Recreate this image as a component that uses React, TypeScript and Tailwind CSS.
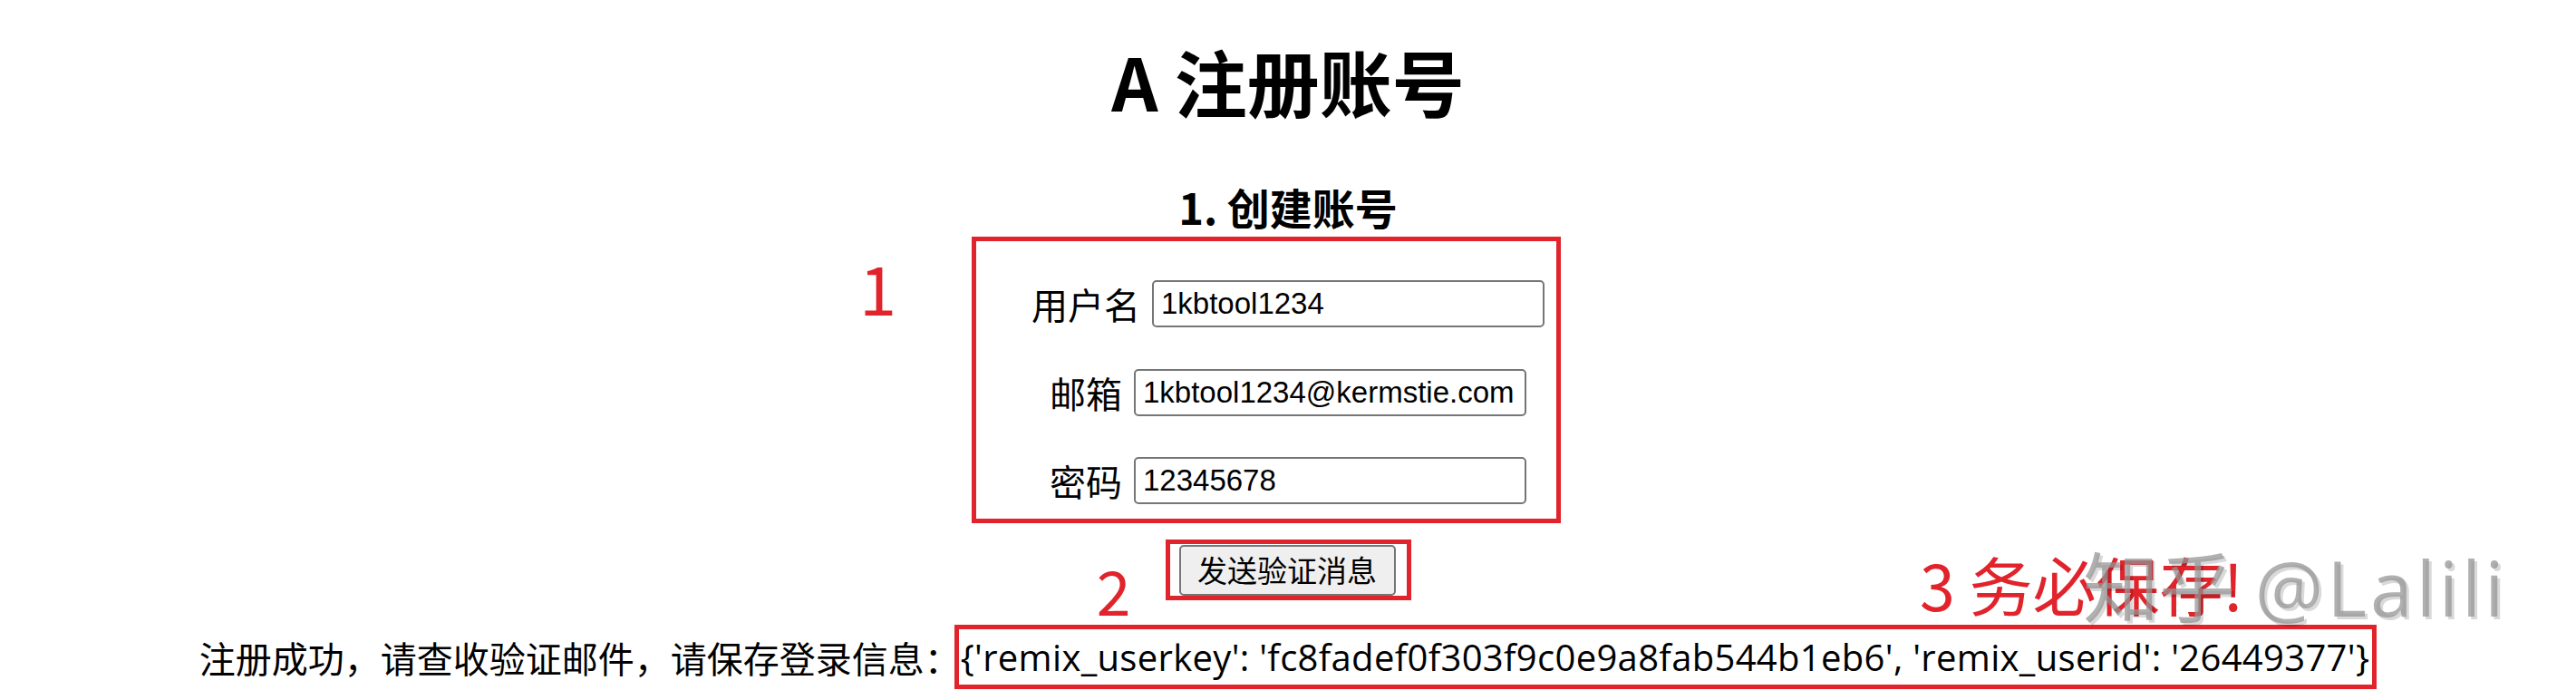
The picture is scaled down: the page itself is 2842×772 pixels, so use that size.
import React from "react";

export default function App() {
  const red = "border-[#e1232b]";
  return (
    <div className="relative w-full h-[772px] overflow-hidden bg-white text-black font-['Noto_Sans_CJK_SC',sans-serif] flex flex-col items-center">
      <h1 className="mt-[48px] text-[80px] leading-none font-bold whitespace-nowrap">A 注册账号</h1>
      <h3 className="mt-[76px] text-[47px] leading-none font-bold whitespace-nowrap">1. 创建账号</h3>

      <div className={`relative mt-[10px] w-[650px] ml-[-48px] pl-[48px] pt-[43px] pb-[16px] border-[5px] ${red} flex flex-col items-center`}>
        <span className="absolute right-[calc(100%+88px)] top-[13px] text-[74px] leading-none text-[#e1232b]">1</span>
        <div className="flex items-center gap-[13px] h-[52px]">
          <label className="text-[40px] leading-none whitespace-nowrap">用户名</label>
          <input
            readOnly
            value="1kbtool1234"
            className="w-[433px] h-[52px] border-2 border-[#767676] rounded-[5px] px-[8px] text-[33px] font-['Liberation_Sans',Arial,sans-serif] outline-none"
          />
        </div>
        <div className="mt-[46px] flex items-center gap-[13px] h-[52px]">
          <label className="text-[40px] leading-none whitespace-nowrap">邮箱</label>
          <input
            readOnly
            value="1kbtool1234@kermstie.com"
            className="w-[433px] h-[52px] border-2 border-[#767676] rounded-[5px] px-[8px] text-[33px] font-['Liberation_Sans',Arial,sans-serif] outline-none"
          />
        </div>
        <div className="mt-[45px] flex items-center gap-[13px] h-[52px]">
          <label className="text-[40px] leading-none whitespace-nowrap">密码</label>
          <input
            readOnly
            value="12345678"
            className="w-[433px] h-[52px] border-2 border-[#767676] rounded-[5px] px-[8px] text-[33px] font-['Liberation_Sans',Arial,sans-serif] outline-none"
          />
        </div>
      </div>

      <div className={`relative mt-[18px] h-[67px] border-[5px] ${red} flex items-center pl-[10px] pr-[12px]`}>
        <span className="absolute right-[calc(100%+43px)] top-[16px] text-[68px] leading-none text-[#e1232b]">2</span>
        <button className="w-[239px] h-[56px] bg-[#efefef] border-2 border-[#767676] rounded-[5px] text-[33px] leading-none whitespace-nowrap">
          发送验证消息
        </button>
      </div>

      <div className="mt-[27px] flex items-center whitespace-nowrap">
        <span className="text-[40px] leading-none">注册成功，请查收验证邮件，请保存登录信息：</span>
        <span className={`ml-[-7px] h-[71px] border-[5px] ${red} flex items-center pl-[2px] pr-[3px] text-[40px] leading-none tracking-[0.32px] font-['Open_Sans','Noto_Sans_CJK_SC',sans-serif]`}>
          {"{'remix_userkey': 'fc8fadef0f303f9c0e9a8fab544b1eb6', 'remix_userid': '26449377'}"}
        </span>
      </div>

      <span className="absolute left-[2118px] top-[609px] text-[70px] leading-none text-[#e1232b] whitespace-nowrap">3 务必保存!</span>
      <span className="absolute left-[2298px] top-[606px] text-[84px] leading-none whitespace-nowrap text-[rgba(150,150,150,0.75)] [text-shadow:3px_3px_0_rgba(0,0,0,0.15)] font-['Open_Sans','Noto_Sans_CJK_SC',sans-serif]">
        知乎 <span className="tracking-[4px]">@Lalili</span>
      </span>
    </div>
  );
}
